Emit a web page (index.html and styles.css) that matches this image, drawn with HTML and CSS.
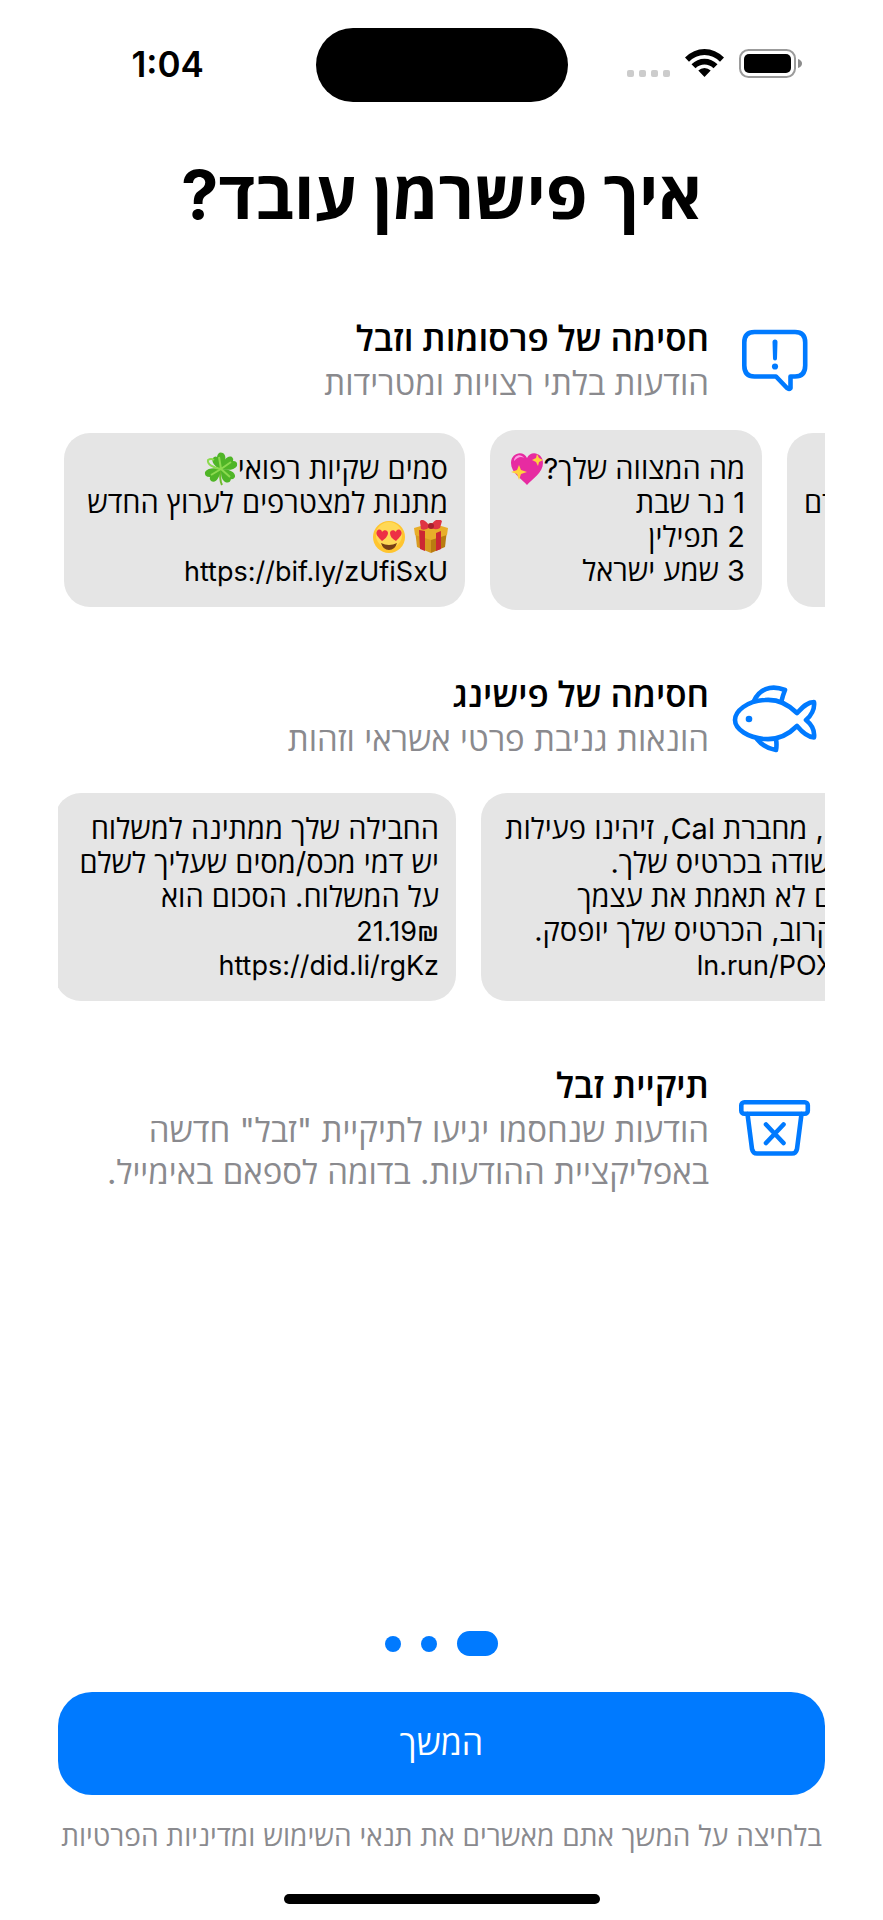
FILE: index.html
```html
<!DOCTYPE html>
<html lang="he" dir="rtl">
<head>
<meta charset="utf-8">
<meta name="viewport" content="width=device-width, initial-scale=1">
<title>איך פישרמן עובד?</title>
<link rel="stylesheet" href="styles.css">
</head>
<body>
<div class="screen">
  <header class="status" dir="ltr">
    <time class="clock">1:04</time>
    <div class="island"></div>
    <div class="indicators">
      <svg class="signal" viewBox="0 0 43 28" aria-hidden="true"><g fill="#ccc"><rect x="0" y="21" width="7" height="7" rx="2"/><rect x="12" y="21" width="7" height="7" rx="2"/><rect x="24" y="21" width="7" height="7" rx="2"/><rect x="36" y="21" width="7" height="7" rx="2"/></g></svg>
      <svg class="wifi" viewBox="0 0 39 28" aria-hidden="true"><path d="M0 8.6Q8.500 0 19.500 0T39 8.600L35 12.800Q28.500 6 19.500 6T4 12.800ZM6.500 15.300Q12 9.700 19.500 9.700T32.500 15.300L28.500 19.200Q24.500 15.500 19.500 15.500T10.500 19.200ZM13.300 21.500Q16 19 19.500 19T25.700 21.500L19.500 28Z"/></svg>
      <svg class="battery" viewBox="0 0 64 30" aria-hidden="true"><rect x="1" y="1" width="55" height="27" rx="8.500" fill="none" stroke="#9b9b9b" stroke-width="2"/><rect x="5" y="5" width="47" height="19" rx="5"/><path d="M59 10Q63 11.500 63 14.500T59 19Z" fill="#8c8c8c"/></svg>
    </div>
  </header>

  <main class="content">
    <h1 class="title">איך פישרמן עובד?</h1>

    <section class="feature">
      <div class="feature-head">
        <svg class="icon" viewBox="0 0 90 76" aria-hidden="true"><g fill="none" stroke="#007aff" stroke-width="4.600" stroke-linecap="round" stroke-linejoin="round"><path d="M25.500 11H66Q76.200 11 76.200 21.500V44.500Q76.200 55.500 66 55.500H61.500V67Q60 68.500 58 67L47 55.500H25.500Q15.300 55.500 15.300 44.500V21.500Q15.300 11 25.500 11Z"/></g><path d="M43.500 21Q43.500 18.500 46 18.500T48.500 21L48 37.500Q48 39.500 46 39.500T44 37.500Z" fill="#007aff"/><circle cx="46" cy="45.500" r="3.100" fill="#007aff"/></svg>
        <div class="feature-text">
          <h2>חסימה של פרסומות וזבל</h2>
          <p>הודעות בלתי רצויות ומטרידות</p>
        </div>
      </div>
      <div class="messages">
        <div class="bubble bubble-peek"><br>קודם</div>
        <div class="bubble bubble-active">
          <div>מה המצווה שלך?<svg class="emoji" viewBox="0 0 34 34" role="img" aria-label="💖"><path d="M17 33C12 27 1 21 1 11 1 0 14-2 17 6 20-2 33 0 33 11 33 21 22 27 17 33Z" fill="#e72ba1"/><path d="M4 9C4 3 11 1 14 6 11 4 8 5 4 9Z" fill="#ff9be3"/><path d="M9 13L11 18 17 20 11 22 9 28 7 22 1 20 7 18ZM27 2L29 6 33 8 29 10 28 14 26 10 22 8 26 6Z" fill="#ffd23d"/></svg></div>
          <div>1 נר שבת</div>
          <div>2 תפילין</div>
          <div>3 שמע ישראל</div>
        </div>
        <div class="bubble bubble-offer">
          <div>סמים שקיות רפואי<svg class="emoji" viewBox="0 0 34 34" role="img" aria-label="🍀"><path d="M17 17Q15 27 18 33" fill="none" stroke="#6dbb2b" stroke-width="2"/><g fill="#4fb527"><path d="M17 17C10 15 6 8 10 5Q12 4 13 5 14-1 19 1C24 5 20 12 17 17Z"/><path d="M17 17C19 9 23 3 28 5Q30 7 29 9 34 9 33 14C30 19 22 18 17 17Z"/><path d="M17 17C25 17 32 20 31 25Q29 28 27 27 26 32 21 30C17 27 17 22 17 17Z"/><path d="M17 17C16 25 12 32 7 29Q5 27 6 25 0 25 1 20C4 15 12 16 17 17Z"/></g><path d="M17 17C9 16 3 12 4 8Q7 6 10 8M17 17L15 5M17 17L27 10M17 17L26 25M17 17L7 23" fill="none" stroke="#8cda4f" stroke-width="2"/></svg></div>
          <div>מתנות למצטרפים לערוץ החדש</div>
          <div><svg class="emoji" viewBox="0 0 34 34" role="img" aria-label="🎁"><path d="M1 10L17 14V33L3 27Z" fill="#d79b20"/><path d="M17 14L33 10 31 27 17 33Z" fill="#b97c10"/><path d="M0 8L17 3 34 8 33 15 17 20 1 15Z" fill="#e8ae29"/><path d="M5 10L11 11V31L6 29ZM22 13L27 11V29L22 31Z" fill="#cc2733"/><path d="M16 7C11-2 6-1 6 2L7 9Q11 11 16 7 21 11 26 8L28 1C25-2 20-1 16 7Z" fill="#df3442"/><circle cx="17" cy="6" r="3" fill="#a91f2f"/></svg> <svg class="emoji" viewBox="0 0 34 34" role="img" aria-label="😍"><circle cx="17" cy="17" r="16" fill="#ffc52f"/><circle cx="17" cy="15" r="13" fill="#ffd956"/><path d="M10 21C6 17 3 14 5 11 7 8 10 10 10 12 12 9 16 10 16 13 16 16 13 19 10 21ZM24 21C20 19 18 16 18 13 18 10 22 9 24 12 24 10 27 8 29 11 31 14 28 17 24 21Z" fill="#ed3045"/><path d="M9 23Q17 27 25 23 23 30 17 30T9 23Z" fill="#774016"/></svg></div>
          <div><bdi>https://bif.ly/zUfiSxU</bdi></div>
        </div>
      </div>
    </section>

    <section class="feature">
      <div class="feature-head">
        <svg class="icon" viewBox="0 0 90 76" aria-hidden="true"><g fill="none" stroke="#007aff" stroke-width="4.600" stroke-linecap="round" stroke-linejoin="round"><path d="M68 36C59 27 48 22 36 23 18 24 6 34 6 43S19 61 36 62C49 63 60 57 68 49 73 55 78 60 85 60.500 86 53 82 47 77 43 82 39 86 32 85 25 78 25 73 31 68 36Z"/><path d="M25 24C30 13 41 7 56 13Q54 18 52.500 24M28 62Q35 71 47 73 48 68 47 62"/></g><circle cx="20" cy="42" r="3.300" fill="#007aff"/></svg>
        <div class="feature-text">
          <h2>חסימה של פישינג</h2>
          <p>הונאות גניבת פרטי אשראי וזהות</p>
        </div>
      </div>
      <div class="messages messages-phishing">
        <div class="bubble bubble-bank">
          <div>הי, מחברת Cal, זיהינו פעילות</div>
          <div>חשודה בכרטיס שלך.</div>
          <div>אם לא תאמת את עצמך</div>
          <div>בקרוב, הכרטיס שלך יופסק.</div>
          <div><bdi>ln.run/POXz</bdi></div>
        </div>
        <div class="bubble bubble-parcel">
          <div>החבילה שלך ממתינה למשלוח</div>
          <div>יש דמי מכס/מסים שעליך לשלם</div>
          <div>על המשלוח. הסכום הוא</div>
          <div><bdi dir="ltr">21.19₪</bdi></div>
          <div><bdi>https://did.li/rgKz</bdi></div>
        </div>
      </div>
    </section>

    <section class="feature">
      <div class="feature-head">
        <svg class="icon" viewBox="0 0 90 76" aria-hidden="true"><g fill="none" stroke="#007aff" stroke-width="4.600" stroke-linecap="round" stroke-linejoin="round"><rect x="12.300" y="13.300" width="66.500" height="11.500" rx="3"/><path d="M18.500 25L23 60Q24 64.500 28 64.500H63Q67 64.500 68 60L72.500 25M37 35.500L54.500 54M54.500 35.500L37 54"/></g></svg>
        <div class="feature-text">
          <h2>תיקיית זבל</h2>
          <p>הודעות שנחסמו יגיעו לתיקיית "זבל" חדשה<br>באפליקציית ההודעות. בדומה לספאם באימייל.</p>
        </div>
      </div>
    </section>
  </main>

  <footer class="actions">
    <div class="pager"><span class="dot dot-current"></span><span class="dot"></span><span class="dot"></span></div>
    <button class="continue" type="button">המשך</button>
    <p class="terms">בלחיצה על המשך אתם מאשרים את תנאי השימוש ומדיניות הפרטיות</p>
    <div class="home-bar"></div>
  </footer>
</div>
</body>
</html>
```
FILE: styles.css
```css
* { box-sizing: border-box; }
body { margin: 0; background: #fff; color: #000; font-family: Inter, "Open Sans", "Noto Sans", sans-serif; }
h1, h2, p { margin: 0; }
.screen { min-height: 100vh; display: flex; flex-direction: column; padding: 28px 58px 16px; }

.status { display: grid; grid-template-columns: 1fr 252px 1fr; height: 74px; }
.clock { justify-self: center; margin: 14px 62px 0 24px; font-size: 35px; line-height: 44px; font-weight: 600; }
.island { background: #000; border-radius: 37px; }
.indicators { display: flex; align-items: flex-start; justify-content: flex-end; gap: 15px; padding: 21px 22px 0 0; }
.signal { width: 43px; height: 28px; }
.wifi { width: 39px; height: 28px; }
.battery { width: 64px; height: 30px; }

.content { flex: 1; }
.title { margin-top: 50px; font-size: 67px; line-height: 86px; font-weight: 700; text-align: center; white-space: nowrap; }
.feature { margin-top: 60px; }
.title + .feature { margin-top: 76px; }
.feature-head { display: flex; align-items: center; gap: 20px; padding-inline-start: 6px; white-space: nowrap; }
.icon { flex: none; width: 90px; height: 76px; }
.feature-text h2 { font-size: 35px; line-height: 48px; font-weight: 600; }
.feature-text p { font-size: 33px; line-height: 42px; color: #8a8a8e; }

.messages { display: flex; justify-content: flex-end; align-items: center; gap: 25px; margin-top: 26px; padding-inline-end: 6px; overflow: hidden; }
.messages-phishing { margin-top: 33px; padding-inline-end: 0; }
.bubble { flex: none; padding: 19px 17px; border-radius: 26px; background: #e5e5e5; font-size: 29px; line-height: 34px; white-space: nowrap; }
.bubble div { height: 34px; }
.bubble bdi { font-size: 27px; }
.bubble-active { width: 272px; padding-block: 22px; }
.bubble-offer { width: 401px; }
.bubble-peek { height: 174px; }
.bubble-bank { padding-inline-end: 24px; }
.bubble-parcel { width: 401px; margin-inline-end: -3px; }
.emoji { width: 34px; height: 34px; vertical-align: -7px; }

.actions { display: flex; flex-direction: column; align-items: center; }
.pager { display: flex; align-items: center; gap: 20px; height: 25px; }
.dot { width: 16px; height: 16px; border-radius: 50%; background: #007aff; }
.dot-current { width: 41px; height: 25px; border-radius: 13px; }
.continue { width: 100%; height: 103px; margin-top: 36px; padding: 0 0 4px; border: 0; border-radius: 34px; background: #007aff; color: #fff; font-family: inherit; font-size: 34px; font-weight: 500; }
.terms { margin-top: 22px; font-size: 28px; line-height: 38px; color: #8a8a8e; white-space: nowrap; }
.home-bar { width: 316px; height: 10px; margin-top: 39px; border-radius: 5px; background: #000; }
```
